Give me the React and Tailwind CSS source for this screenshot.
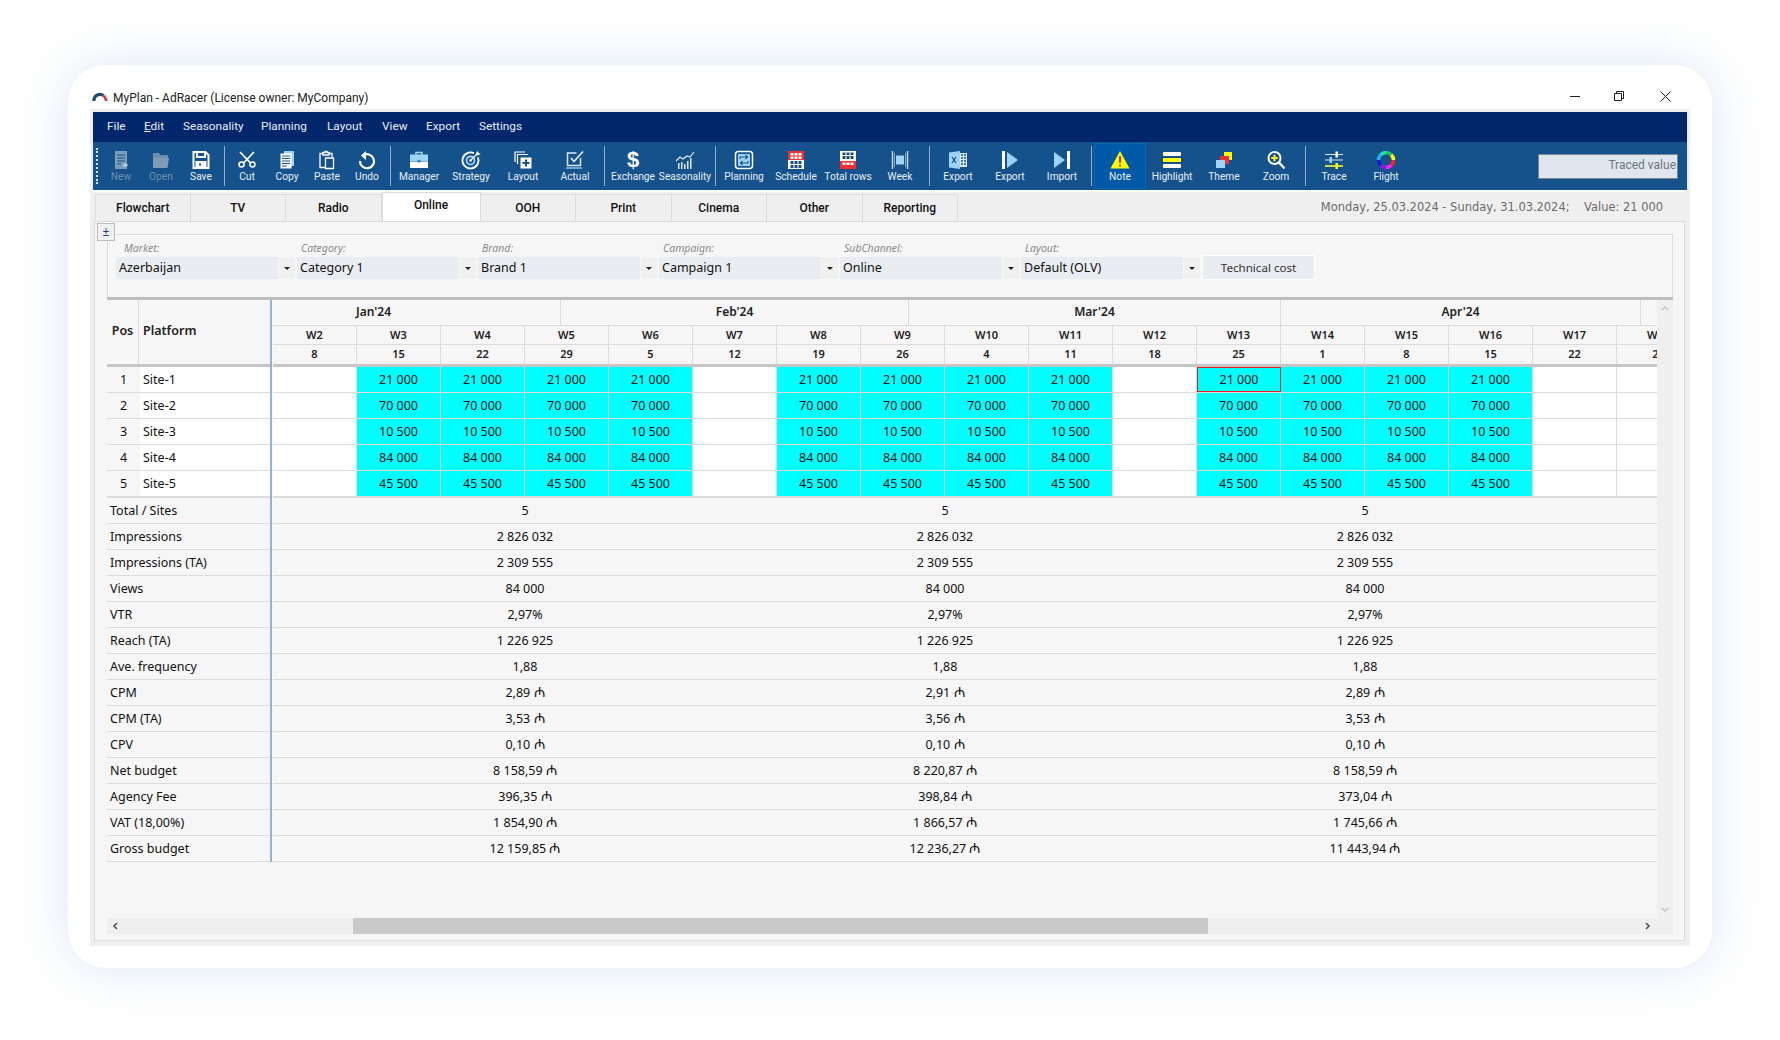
import React from 'react';

const BLUE = '#9fd3f5';

// toolbar icons, all drawn on a 20x20 box
const icons = {
  New: (
    <g>
      <path d="M4 1h12v18H4z" fill="#7f9cb8" />
      <path d="M6 5h8M6 8h8M6 11h8M6 14h4" stroke="#15528c" strokeWidth="1" />
      <path d="M14 12v6M11 15h6" stroke="#7f9cb8" strokeWidth="2" />
      <path d="M14 13v4M12 15h4" stroke="#d5dfe8" strokeWidth="1" />
    </g>
  ),
  Open: (
    <g>
      <path d="M2 3h6l1.5 2H17v3H2z" fill="#6f8fae" />
      <path d="M2 8h16l-1.5 10H2z" fill="#7f9cb8" />
    </g>
  ),
  Save: (
    <g fill="none" stroke="#fff" strokeWidth="2">
      <path d="M2.5 2h12l3 3v13h-15z" />
      <path d="M6 2v5h8V2" />
      <path d="M5.500 17v-5h9v5" fill="#fff" />
      <path d="M8 14.500h2" stroke="#15528c" />
    </g>
  ),
  Cut: (
    <g fill="none" stroke="#fff">
      <circle cx="4.500" cy="14.500" r="2.500" strokeWidth="1.600" />
      <circle cx="15.500" cy="14.500" r="2.500" strokeWidth="1.600" />
      <path d="M6.500 13 17 2M13.500 13 3 2" strokeWidth="1.800" />
    </g>
  ),
  Copy: (
    <g>
      <path d="M7 1h10v15H7z" fill={BLUE} />
      <path d="M3.500 3.500h11v15h-11z" fill="#fff" />
      <path d="M5 6h8M5 8.500h8M5 11h8M5 13.500h8M5 16h5" stroke="#15528c" strokeWidth="1" />
    </g>
  ),
  Paste: (
    <g fill="none" stroke="#fff" strokeWidth="1.300">
      <path d="M6 3.500H3v14h5M12 3.500h3v3.500" />
      <path d="M6 5V2.500h2V1.500h2v1h2V5z" />
      <path d="M8.500 8h8v10.500h-8z" />
    </g>
  ),
  Undo: (
    <g fill="none" stroke="#fff" strokeWidth="2.200">
      <path d="M6 5.500a7 7 0 1 1-3 5.500" />
      <path d="M9 1 4 5.500 9 10z" fill="#fff" stroke="none" />
    </g>
  ),
  Manager: (
    <g>
      <path d="M7 5V2.500h6V5" fill="none" stroke={BLUE} strokeWidth="1.500" />
      <path d="M1 4.500h18V11H1z" fill={BLUE} />
      <path d="M1 11.500h18V18H1z" fill="#fff" />
      <path d="M8.500 10h3v2.500h-3z" fill="#3d7fb8" />
    </g>
  ),
  Strategy: (
    <g fill="none" stroke="#fff">
      <path d="M13 3.300a8 8 0 1 0 3.800 4" strokeWidth="1.800" />
      <circle cx="9.500" cy="10.500" r="4" stroke={BLUE} strokeWidth="1.800" />
      <circle cx="9.500" cy="10.500" r="1.300" fill="#fff" stroke="none" />
      <path d="M10 10 16.500 3.500" strokeWidth="1.300" />
      <path d="M15 3l2-2 .5 2 2 .5-2 2-2-.5z" fill="#fff" stroke="none" />
    </g>
  ),
  Layout: (
    <g fill="none">
      <path d="M2 12V2h10" stroke="#fff" strokeWidth="1.200" />
      <path d="M4.500 14V4.500H15" stroke="#fff" strokeWidth="1.200" />
      <path d="M7.500 7.500h11v11h-11z" fill="#fff" />
      <path d="M13 9.500v7M9.500 13h7" stroke="#15528c" strokeWidth="2" />
    </g>
  ),
  Actual: (
    <g fill="none" stroke="#dbe8f3">
      <path d="M15.500 8v7.500h-13V3h9" strokeWidth="1.500" />
      <path d="M6 8l3 3.500L18 1.500" strokeWidth="1.800" />
      <path d="M1 18h16" strokeWidth="1.300" stroke={BLUE} />
    </g>
  ),
  Seasonality: (
    <g>
      <path d="M3 13h1.500v6H3zM6 12h1.500v7H6zM9 14h1.500v5H9zM12 11h1.500v8H12zM15 8h1.500v11H15z" fill="#dbe8f3" />
      <path d="M1 11l4-4 3 2 4-3 3 1 4-5" fill="none" stroke="#dbe8f3" strokeWidth="1.200" />
    </g>
  ),
  Planning: (
    <g fill="none">
      <rect x="1.500" y="1.500" width="17" height="17" rx="3" stroke="#fff" strokeWidth="1.500" />
      <rect x="4" y="4" width="12" height="12" rx="1" fill={BLUE} />
      <path d="M6 9V7h7M11.500 5l2 2-2 2M14 11v2H7M8.500 15l-2-2 2-2" stroke="#15528c" strokeWidth="1.200" />
    </g>
  ),
  Schedule: (
    <g>
      <path d="M2 1h16v18H2z" fill="#fff" />
      <path d="M2 1h16v9H2z" fill="#ee3034" />
      <path d="M4.500 11h3v3h-3zM8.500 11h3v3h-3zM12.500 11h3v3h-3zM4.500 15h3v3h-3zM8.500 15h3v3h-3zM12.500 15h3v3h-3z" fill="#1f4f80" />
      <path d="M4.500 3h3v2.500h-3zM8.500 3h3v2.500h-3zM12.500 3h3v2.500h-3zM4.500 6.500h3V9h-3zM8.500 6.500h3V9h-3zM12.500 6.500h3V9h-3z" fill="#fff" />
    </g>
  ),
  'Total rows': (
    <g>
      <path d="M2 1h16v18H2z" fill="#fff" />
      <path d="M2 11h16v8H2z" fill="#ee3034" />
      <path d="M4.500 2.500h3V5h-3zM8.500 2.500h3V5h-3zM12.500 2.500h3V5h-3zM4.500 6h3v3h-3zM8.500 6h3v3h-3zM12.500 6h3v3h-3z" fill="#1f4f80" />
      <path d="M4.500 12.500h3V15h-3zM8.500 12.500h3V15h-3zM12.500 12.500h3V15h-3z" fill="#fff" />
    </g>
  ),
  Week: (
    <g>
      <path d="M2.500 1v18M17.500 1v18" stroke="#c3d6e6" strokeWidth="1.500" />
      <path d="M4.500 3v14M15.500 3v14" stroke="#7fa8ca" strokeWidth="1" />
      <path d="M6 5.500h8v9H6z" fill={BLUE} />
    </g>
  ),
  'Export-xls': (
    <g>
      <path d="M8 3h11v14H8z" fill="#dbe8f3" />
      <path d="M13 5h2M16 5h2M13 8h2M16 8h2M13 11h2M16 11h2M13 14h2M16 14h2" stroke="#15528c" strokeWidth="1.500" />
      <path d="M1 2.500 12 1v18L1 17.500z" fill={BLUE} />
      <path d="M4 7l4 6M8 7l-4 6" stroke="#15528c" strokeWidth="1.300" />
    </g>
  ),
  'Export-arrow': (
    <g>
      <path d="M2 1h3v18H2z" fill="#fff" />
      <path d="M7 2l11 8-11 8z" fill={BLUE} />
    </g>
  ),
  Import: (
    <g>
      <path d="M2 2l11 8-11 8z" fill={BLUE} />
      <path d="M15 1h3v18h-3z" fill="#fff" />
    </g>
  ),
  Note: (
    <g>
      <path d="M10 1 19.500 18.500H.5z" fill="#ffff00" />
      <path d="M9 6h2v7H9zM9 14.500h2v2H9z" fill="#e8262a" />
    </g>
  ),
  Highlight: (
    <g>
      <rect x="1" y="2" width="18" height="4" rx="1" fill="#fff" />
      <rect x="1" y="8" width="18" height="4" fill="#ffff00" />
      <rect x="1" y="14" width="18" height="4" rx="1" fill="#fff" />
    </g>
  ),
  Theme: (
    <g>
      <path d="M10 2h8v8h-8z" fill="#ffff00" />
      <path d="M6 6h9v8H6z" fill="#ee3034" />
      <path d="M2 10h9v8H2z" fill={BLUE} />
    </g>
  ),
  Zoom: (
    <g fill="none">
      <circle cx="8.500" cy="8" r="6" stroke="#fff" strokeWidth="2" />
      <circle cx="8.500" cy="8" r="4.500" fill="#15528c" />
      <path d="M8.500 4.800v6.400M5.300 8h6.400" stroke="#ffff00" strokeWidth="2" />
      <path d="M13 12.500 18.500 18.500" stroke="#fff" strokeWidth="2.400" />
    </g>
  ),
  Trace: (
    <g>
      <path d="M1 4.500h18M1 10h18M1 16h18" stroke="#dbe8f3" strokeWidth="1.200" />
      <path d="M1 16h18" stroke="#ffff00" strokeWidth="1.200" />
      <path d="M11.500 1.500h2.500v6h-2.500z" fill="#fff" />
      <path d="M5.500 7h2.500v6H5.500z" fill={BLUE} />
      <path d="M11.500 13h2.500v6h-2.500z" fill="#ffff00" />
    </g>
  ),
  Flight: (
    <g fill="none" strokeWidth="3.600">
      <path d="M10 2.500a7.500 7.500 0 0 1 5.300 2.200" stroke="#22c55e" />
      <path d="M15.300 4.700a7.500 7.500 0 0 1 2.200 5.300" stroke="#ffff00" />
      <path d="M17.500 10a7.500 7.500 0 0 1-2.200 5.300" stroke="#ff2020" />
      <path d="M15.300 15.300a7.500 7.500 0 0 1-5.300 2.200" stroke="#ff20ff" />
      <path d="M10 17.500a7.500 7.500 0 0 1-5.300-2.200" stroke="#8020e0" />
      <path d="M4.700 15.300a7.500 7.500 0 0 1-2.200-5.300" stroke="#1020d0" />
      <path d="M2.500 10a7.500 7.500 0 0 1 2.200-5.300" stroke="#20b0f0" />
      <path d="M4.700 4.700a7.500 7.500 0 0 1 5.300-2.200" stroke="#20e0c0" />
    </g>
  ),
};

const groups = [
  { w: 'w-[40px]', items: [{ label: 'New', off: true }, { label: 'Open', off: true }, { label: 'Save' }] },
  { w: 'w-[40px]', items: [{ label: 'Cut' }, { label: 'Copy' }, { label: 'Paste' }, { label: 'Undo' }] },
  { w: 'w-[52px]', items: [{ label: 'Manager' }, { label: 'Strategy' }, { label: 'Layout' }, { label: 'Actual' }] },
  { w: 'w-[52px]', items: [{ label: 'Exchange' }, { label: 'Seasonality' }] },
  { w: 'w-[52px]', items: [{ label: 'Planning' }, { label: 'Schedule' }, { label: 'Total rows' }, { label: 'Week' }] },
  { w: 'w-[52px]', items: [{ label: 'Export', icon: 'Export-xls' }, { label: 'Export', icon: 'Export-arrow' }, { label: 'Import' }] },
  { w: 'w-[52px]', items: [{ label: 'Note', active: true }, { label: 'Highlight' }, { label: 'Theme' }, { label: 'Zoom' }] },
  { w: 'w-[52px]', items: [{ label: 'Trace' }, { label: 'Flight' }] },
];

const menu = [
  { name: 'File', w: 'w-[18px]' },
  { name: 'Edit', w: 'w-[20px]' },
  { name: 'Seasonality', w: 'w-[59px]' },
  { name: 'Planning', w: 'w-[47px]' },
  { name: 'Layout', w: 'w-[36px]' },
  { name: 'View', w: 'w-[25px]' },
  { name: 'Export', w: 'w-[34px]' },
  { name: 'Settings', w: 'w-[42px]' },
];
const tabs = ['Flowchart', 'TV', 'Radio', 'Online', 'OOH', 'Print', 'Cinema', 'Other', 'Reporting'];
const filters = [
  { label: 'Market:', value: 'Azerbaijan', labelPad: 'pl-[8px]' },
  { label: 'Category:', value: 'Category 1', labelPad: 'pl-[4px]' },
  { label: 'Brand:', value: 'Brand 1', labelPad: 'pl-[4px]' },
  { label: 'Campaign:', value: 'Campaign 1', labelPad: 'pl-[4px]' },
  { label: 'SubChannel:', value: 'Online', labelPad: 'pl-[4px]' },
  { label: 'Layout:', value: 'Default (OLV)', labelPad: 'pl-[4px]' },
];

const weeks = [
  ['W2', 8], ['W3', 15], ['W4', 22], ['W5', 29], ['W6', 5], ['W7', 12], ['W8', 19], ['W9', 26], ['W10', 4],
  ['W11', 11], ['W12', 18], ['W13', 25], ['W14', 1], ['W15', 8], ['W16', 15], ['W17', 22], ['W18', 29],
];
const activeWeeks = ['W3', 'W4', 'W5', 'W6', 'W8', 'W9', 'W10', 'W11', 'W13', 'W14', 'W15', 'W16'];
const sites = [
  ['Site-1', '21 000'],
  ['Site-2', '70 000'],
  ['Site-3', '10 500'],
  ['Site-4', '84 000'],
  ['Site-5', '45 500'],
];
const summary = [
  ['Total / Sites', '5', '5', '5'],
  ['Impressions', '2 826 032', '2 826 032', '2 826 032'],
  ['Impressions (TA)', '2 309 555', '2 309 555', '2 309 555'],
  ['Views', '84 000', '84 000', '84 000'],
  ['VTR', '2,97%', '2,97%', '2,97%'],
  ['Reach (TA)', '1 226 925', '1 226 925', '1 226 925'],
  ['Ave. frequency', '1,88', '1,88', '1,88'],
  ['CPM', '2,89 ₼', '2,91 ₼', '2,89 ₼'],
  ['CPM (TA)', '3,53 ₼', '3,56 ₼', '3,53 ₼'],
  ['CPV', '0,10 ₼', '0,10 ₼', '0,10 ₼'],
  ['Net budget', '8 158,59 ₼', '8 220,87 ₼', '8 158,59 ₼'],
  ['Agency Fee', '396,35 ₼', '398,84 ₼', '373,04 ₼'],
  ['VAT (18,00%)', '1 854,90 ₼', '1 866,57 ₼', '1 745,66 ₼'],
  ['Gross budget', '12 159,85 ₼', '12 236,27 ₼', '11 443,94 ₼'],
];

function ToolButton({ item, width }) {
  const key = item.icon || item.label;
  return (
    <div
      className={`${width} h-[46px] shrink-0 flex flex-col items-center pt-[6px] border ${
        item.active ? 'bg-[#0059a6] border-[#0a66b5]' : 'border-transparent'
      }`}
    >
      <div className="h-[20px] flex items-center justify-center">
        {key === 'Exchange' ? (
          <span className="text-white text-[22px] leading-[20px] font-bold font-['Liberation_Sans',sans-serif]">$</span>
        ) : (
          <svg viewBox="0 0 20 20" className="w-[20px] h-[20px]">
            {icons[key]}
          </svg>
        )}
      </div>
      <span className={`h-[12px] text-[10.2px] leading-[12px] mt-[1px] whitespace-nowrap ${item.off ? 'text-[#6f8fae]' : 'text-[#e8f0f7]'}`}>
        {item.label}
      </span>
    </div>
  );
}

function Toolbar() {
  return (
    <div className="h-[48px] bg-[#15528c] flex items-center font-['Roboto',sans-serif]">
      <div className="w-[2px] h-[36px] ml-[3px] mr-[3px] border-l-2 border-dotted border-[#cfe0ee] shrink-0" />
      {groups.map((g, i) => (
        <React.Fragment key={i}>
          {i > 0 && <div className={`w-px h-[40px] mr-[2px] shrink-0 bg-[#8fb0cd] ${i === 4 ? 'ml-[4px]' : 'ml-[3px]'}`} />}
          {g.items.map((item) => (
            <ToolButton key={item.icon || item.label} item={item} width={g.w} />
          ))}
        </React.Fragment>
      ))}
      <div className="ml-auto mr-[9px] w-[140px] h-[25px] bg-[#dfe6ed] border border-[#7b8791] text-right pr-px text-[12px] leading-[20px] text-[#6d7780]">
        Traced value
      </div>
    </div>
  );
}

function Filters() {
  return (
    <div className="ml-[12px] mt-[12px] w-[1566px] h-[63px] border border-b-0 border-[#dcdcdc] pl-[8px] flex gap-[2px]">
      {filters.map((f) => (
        <div key={f.label} className="w-[179px] shrink-0">
          <div className={`${f.labelPad} pt-[6px] h-[22px] text-[10.5px] leading-[14px] italic text-[#8a8a8a]`}>{f.label}</div>
          <div className="flex h-[22px] gap-px">
            <div className="w-[162px] bg-[#e9edf1] pl-[3px] text-[12.5px] leading-[21px] text-[#111]">{f.value}</div>
            <div className="w-[16px] bg-[#f0f0f0] flex items-center justify-center">
              <div className="w-0 h-0 border-x-[3px] border-x-transparent border-t-[3px] border-t-[#222]" />
            </div>
          </div>
        </div>
      ))}
      <div className="mt-[20px] w-[113px] h-[25px] bg-[#e9edf1] border border-white text-center text-[11.6px] leading-[23px] text-[#333]">
        Technical cost
      </div>
    </div>
  );
}

function LeftColumn() {
  return (
    <div className="w-[163px] shrink-0">
      <div className="flex h-[64px] text-[12.5px] font-semibold text-[#222] leading-[61px]">
        <div className="w-[32px] border-r border-[#dcdcdc] text-center">Pos</div>
        <div className="pl-[4px]">Platform</div>
      </div>
      <div className="h-[3px] bg-[#c6c6c6]" />
      {sites.map(([name], i) => (
        <div key={name} className="flex h-[26px] border-b border-[#dcdcdc] leading-[25px]">
          <div className="w-[33px] text-center">{i + 1}</div>
          <div className="flex-1 bg-white pl-[3px]">{name}</div>
        </div>
      ))}
      <div className="h-px bg-[#dcdcdc]" />
      {summary.map(([label]) => (
        <div key={label} className="h-[26px] border-b border-[#dcdcdc] pl-[3px] leading-[25px]">{label}</div>
      ))}
    </div>
  );
}

// manat sign, a bit larger than the digits as in the picture
function Money({ value }) {
  if (!value.endsWith('₼')) return value;
  return (
    <>
      {value.slice(0, -1)}
      <span className="font-['DejaVu_Sans',sans-serif] text-[14px] leading-[14px]">₼</span>
    </>
  );
}

function RightColumn() {
  return (
    <div className="ml-px w-[1384px] shrink-0 overflow-hidden">
      <div className="flex h-[26px] border-b border-[#dcdcdc] text-[12px] font-semibold text-[#222] leading-[23px] text-center">
        <div className="w-[288px] shrink-0 border-r border-[#dcdcdc] pr-[86px]">Jan'24</div>
        <div className="w-[348px] shrink-0 border-r border-[#dcdcdc]">Feb'24</div>
        <div className="w-[372px] shrink-0 border-r border-[#dcdcdc]">Mar'24</div>
        <div className="w-[360px] shrink-0 border-r border-[#dcdcdc]">Apr'24</div>
      </div>
      <div className="flex h-[19px] border-b border-[#dcdcdc] text-[11px] font-semibold text-[#222] leading-[18px] text-center">
        {weeks.map(([w]) => (
          <div key={w} className="w-[84px] shrink-0 border-r border-[#dcdcdc]">{w}</div>
        ))}
      </div>
      <div className="flex h-[19px] text-[11px] font-semibold text-[#222] leading-[18px] text-center">
        {weeks.map(([w, d]) => (
          <div key={w} className="w-[84px] shrink-0 border-r border-[#dcdcdc]">{d}</div>
        ))}
      </div>
      <div className="h-[3px] bg-[#c6c6c6]" />
      {sites.map(([name, value], i) => (
        <div key={name} className="flex h-[26px] border-b border-[#dcdcdc] bg-white leading-[25px] text-center">
          {weeks.map(([w]) => {
            const on = activeWeeks.includes(w);
            const selected = w === 'W13' && i === 0;
            return (
              <div
                key={w}
                className={`w-[84px] shrink-0 border-r ${on ? 'bg-[#00ffff]' : ''} ${
                  selected ? 'border border-[#e0201c] leading-[23px]' : 'border-[#dcdcdc]'
                }`}
              >
                {on ? value : ''}
              </div>
            );
          })}
        </div>
      ))}
      <div className="h-px bg-[#dcdcdc]" />
      {summary.map(([label, a, b, c]) => (
        <div key={label} className="flex h-[26px] border-b border-[#dcdcdc] leading-[25px] text-center">
          <div className="w-[504px] shrink-0"><Money value={a} /></div>
          <div className="w-[336px] shrink-0"><Money value={b} /></div>
          <div className="w-[504px] shrink-0"><Money value={c} /></div>
        </div>
      ))}
    </div>
  );
}

export default function App() {
  return (
    <div className="w-[1780px] h-[1040px] bg-white pt-[65px] pl-[68px] font-['Noto_Sans',sans-serif] overflow-hidden">
      <div className="w-[1644px] h-[903px] bg-white rounded-[38px] shadow-[0_0_50px_rgba(185,208,235,0.5)]">
        {/* title bar */}
        <div className="h-[44px] flex items-end pb-[1px] pl-[24px] pr-[41px]">
          <svg viewBox="0 0 16 10" className="w-[16px] h-[10px] mb-[7px]">
            <path d="M2 10a6 6 0 0 1 9.500-5.500" fill="none" stroke="#1d4a6e" strokeWidth="3.200" />
            <path d="M12 4.500 14.500 10" stroke="#e0303a" strokeWidth="2.600" />
          </svg>
          <span className="ml-[5px] text-[12px] leading-[20px] text-[#222] font-['Roboto',sans-serif]">MyPlan - AdRacer (License owner: MyCompany)</span>
          <div className="ml-auto flex items-center gap-[34px] h-[20px] mb-[2px]">
            <div className="w-[10px] h-px bg-[#222]" />
            <svg viewBox="0 0 10 10" className="w-[10px] h-[10px] mr-[2px]">
              <path d="M.5 2.500h7v7h-7zM2.500 2.500v-2h7v7h-2" fill="none" stroke="#222" />
            </svg>
            <svg viewBox="0 0 11 11" className="w-[11px] h-[11px]">
              <path d="M.5.5l10 10M10.500.5l-10 10" fill="none" stroke="#222" />
            </svg>
          </div>
        </div>

        <div className="ml-[22px] w-[1600px] h-[837px] bg-[#efefef] px-[3px] pt-[3px]">
          {/* menu */}
          <div className="h-[30px] bg-[#01266c] flex items-center pl-[14px] gap-[19px] text-[11.8px] text-[#e8eef5] font-['Roboto',sans-serif]">
            {menu.map((m) => (
              <span key={m.name} className={`${m.w} whitespace-nowrap`}>{m.name === 'Edit' ? <><u>E</u>dit</> : m.name}</span>
            ))}
          </div>
          <Toolbar />
          <div className="h-[2px] bg-white" />

          {/* tabs */}
          <div className="h-[29px] flex items-end font-['Roboto',sans-serif] text-[12px] font-medium text-[#111] pl-[2px]">
            {tabs.map((t) =>
              t === 'Online' ? (
                <div key={t} className="w-[99px] h-[29px] bg-white text-center leading-[25px] border-x border-t border-[#dcdcdc]">{t}</div>
              ) : (
                <div key={t} className="w-[95.5px] h-[27px] text-center leading-[26px] border-r border-t border-[#dcdcdc] first:border-l">{t}</div>
              )
            )}
            <div className="ml-auto mr-[24px] mt-[2px] self-center text-[11.45px] font-normal text-[#6b6b6b] font-['DejaVu_Sans',sans-serif] whitespace-pre">
              Monday, 25.03.2024 - Sunday, 31.03.2024;    Value: 21 000
            </div>
          </div>

          {/* main panel */}
          <div className="relative ml-px w-[1591px] h-[720px] bg-[#f6f6f6] border border-[#dcdcdc] text-[12.500px] text-[#111]">
            <div className="absolute left-[2px] top-[1px] w-[18px] h-[18px] bg-[#eef1f4] border border-[#bcbcbc] text-center text-[12px] leading-[15px] text-[#2b3a8c]">±</div>
            <Filters />
            <div className="ml-[12px] w-[1566px]">
              <div className="h-[3px] bg-[#bdbdbd]" />
              <div className="flex h-[618px]">
                <div className="flex w-[1550px] items-start">
                  <LeftColumn />
                  <div className="w-[2px] h-[562px] shrink-0 bg-[#8fb4d8]" />
                  <RightColumn />
                </div>
                <div className="w-[16px] bg-[#efefef] flex flex-col items-center justify-between py-[5px] text-[#c4c4c4]">
                  <svg viewBox="0 0 8 6" className="w-[8px] h-[6px]"><path d="M1 5l3-3 3 3" fill="none" stroke="currentColor" strokeWidth="1.500" /></svg>
                  <svg viewBox="0 0 8 6" className="w-[8px] h-[6px]"><path d="M1 1l3 3 3-3" fill="none" stroke="currentColor" strokeWidth="1.500" /></svg>
                </div>
              </div>
              {/* horizontal scroll */}
              <div className="h-[16px] bg-[#efefef] flex items-center">
                <div className="w-[246px] shrink-0 pl-[5px]">
                  <svg viewBox="0 0 6 8" className="w-[6px] h-[8px] text-[#555]"><path d="M5 1 2 4l3 3" fill="none" stroke="currentColor" strokeWidth="1.600" /></svg>
                </div>
                <div className="w-[855px] h-full bg-[#c9c9c9]" />
                <div className="flex-1 flex justify-end pr-[22px]">
                  <svg viewBox="0 0 6 8" className="w-[6px] h-[8px] text-[#555]"><path d="M1 1l3 3-3 3" fill="none" stroke="currentColor" strokeWidth="1.600" /></svg>
                </div>
              </div>
            </div>
          </div>
        </div>
      </div>
    </div>
  );
}
